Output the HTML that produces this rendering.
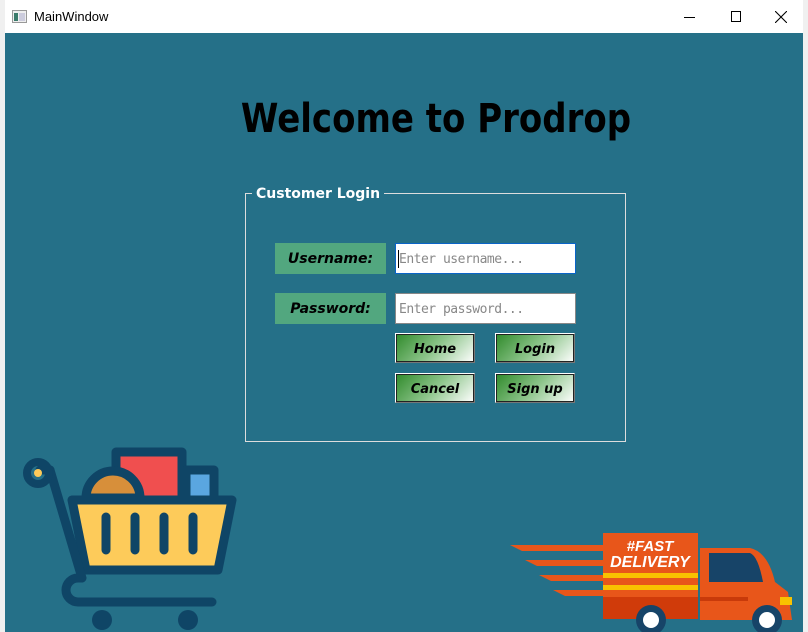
<!DOCTYPE html>
<html><head><meta charset="utf-8"><style>
*{margin:0;padding:0;box-sizing:border-box}
body{width:808px;height:632px;overflow:hidden;background:#f0f0f0;position:relative;font-family:"Comic Sans MS","DejaVu Sans","Liberation Sans",sans-serif}
.abs{position:absolute}
#title{left:5px;top:0;width:798px;height:33px;background:#fff}
#client{left:5px;top:33px;width:798px;height:599px;background:#257088}
.lbl{background:#52a77f;color:#000;font-weight:bold;font-style:italic;font-size:14px;text-align:center;line-height:33px}
.inp{background:#fff;border:1px solid #888;color:#888;font-size:13px;line-height:31px;padding-left:3px;font-family:"DejaVu Sans Mono","Liberation Mono",monospace;letter-spacing:-0.5px}
.btn{width:80px;height:30px;border:1px solid #777;border-top-color:#fff;border-left-color:#fff;background:linear-gradient(135deg,#2f8a2a 0%,#8cc48a 50%,#fff 100%);font-style:italic;font-weight:bold;font-size:13px;text-align:center;line-height:32px;color:#000;outline:1px solid #222;outline-offset:-2px}
</style></head><body>
<div class="abs" id="title"></div>
<svg class="abs" style="left:12px;top:10px" width="16" height="14"><rect x="0.5" y="0.5" width="14" height="12" fill="#eee" stroke="#999"/><rect x="2" y="3" width="4" height="8" fill="#3a7a6a"/><rect x="7" y="3" width="6" height="8" fill="#ccd"/></svg>
<div class="abs" style="left:34px;top:9px;font:13px 'Liberation Sans',sans-serif;color:#000">MainWindow</div>
<div class="abs" style="left:684px;top:17px;width:11px;height:1px;background:#000"></div>
<div class="abs" style="left:731px;top:11px;width:10px;height:11px;border:1px solid #000"></div>
<svg class="abs" style="left:775px;top:11px" width="12" height="12"><path d="M0 0L12 12M12 0L0 12" stroke="#000" stroke-width="1.1"/></svg>
<div class="abs" id="client"></div>
<div class="abs" style="left:136px;top:96px;width:600px;text-align:center;font-size:40px;font-weight:bold;color:#000;transform:scaleX(0.85);transform-origin:center">Welcome to Prodrop</div>
<div class="abs" style="left:245px;top:193px;width:381px;height:249px;border:1px solid #ddd"></div>
<div class="abs" style="left:252px;top:186px;padding:0 4px;background:#257088;color:#fff;font-weight:bold;font-size:14px">Customer Login</div>
<div class="abs lbl" style="left:275px;top:243px;width:111px;height:31px">Username:</div>
<div class="abs lbl" style="left:275px;top:293px;width:111px;height:31px">Password:</div>
<div class="abs inp" style="left:395px;top:243px;width:181px;height:31px;border-color:#0a64c8">Enter username...</div>
<div class="abs" style="left:398px;top:250px;width:1px;height:18px;background:#000"></div>
<div class="abs inp" style="left:395px;top:293px;width:181px;height:31px">Enter password...</div>
<div class="abs btn" style="left:395px;top:333px">Home</div>
<div class="abs btn" style="left:495px;top:333px">Login</div>
<div class="abs btn" style="left:395px;top:373px">Cancel</div>
<div class="abs btn" style="left:495px;top:373px">Sign up</div>
<svg class="abs" style="left:0;top:440px" width="260" height="192">
<g stroke="#0f4566" stroke-width="9" stroke-linejoin="round" stroke-linecap="round">
<rect x="116" y="12" width="66" height="50" fill="#f04f4f"/>
<rect x="186" y="30" width="28" height="32" fill="#5aa6e0"/>
<path d="M86 58a27 27 0 0 1 54 0z" fill="#d78f3a"/>
<path d="M72 60H232L218 130H86Z" fill="#fdcb5a"/>
<path d="M50 30L82 138H78a12 12 0 0 0 0 24H212" fill="none"/>
<path d="M50 30H40" fill="none"/>
<path d="M106 77v33M135 77v33M164 77v33M193 77v33" fill="none"/>
</g>
<circle cx="38" cy="33" r="11" fill="none" stroke="#0f4566" stroke-width="8"/>
<circle cx="38" cy="33" r="4" fill="#fdcb5a"/>
<circle cx="102" cy="180" r="10" fill="#0f4566"/><circle cx="188" cy="180" r="10" fill="#0f4566"/>
</svg>
<svg class="abs" style="left:500px;top:520px" width="308" height="112">
<path d="M10 25H105L110 31H22Z M25 40H105L110 46H37Z M39 55H105L110 61H51Z M53 70H105L110 76H65Z" fill="#e8561a"/>
<rect x="103" y="13" width="95" height="86" fill="#e8561a"/>
<rect x="103" y="77" width="95" height="22" fill="#d03b0a"/>
<rect x="103" y="53" width="95" height="5" fill="#f9c200"/>
<rect x="103" y="65" width="95" height="5" fill="#f9c200"/>
<path d="M200 28H250Q268 32 275 62L288 72L292 100H200Z" fill="#e8561a"/>
<path d="M209 33H250Q258 36 263 62H209Z" fill="#174468"/>
<rect x="200" y="77" width="48" height="4" fill="#c83a0a"/>
<rect x="280" y="77" width="12" height="8" fill="#f9c200"/>
<circle cx="151" cy="100" r="15" fill="#174468"/><circle cx="151" cy="100" r="8" fill="#fff"/>
<circle cx="267" cy="100" r="15" fill="#174468"/><circle cx="267" cy="100" r="8" fill="#fff"/>
<text x="150" y="31" font-family="Liberation Sans" font-style="italic" font-weight="bold" font-size="15" fill="#fff" text-anchor="middle">#FAST</text>
<text x="150" y="47" font-family="Liberation Sans" font-style="italic" font-weight="bold" font-size="16" fill="#fff" text-anchor="middle">DELIVERY</text>
</svg>
</body></html>
